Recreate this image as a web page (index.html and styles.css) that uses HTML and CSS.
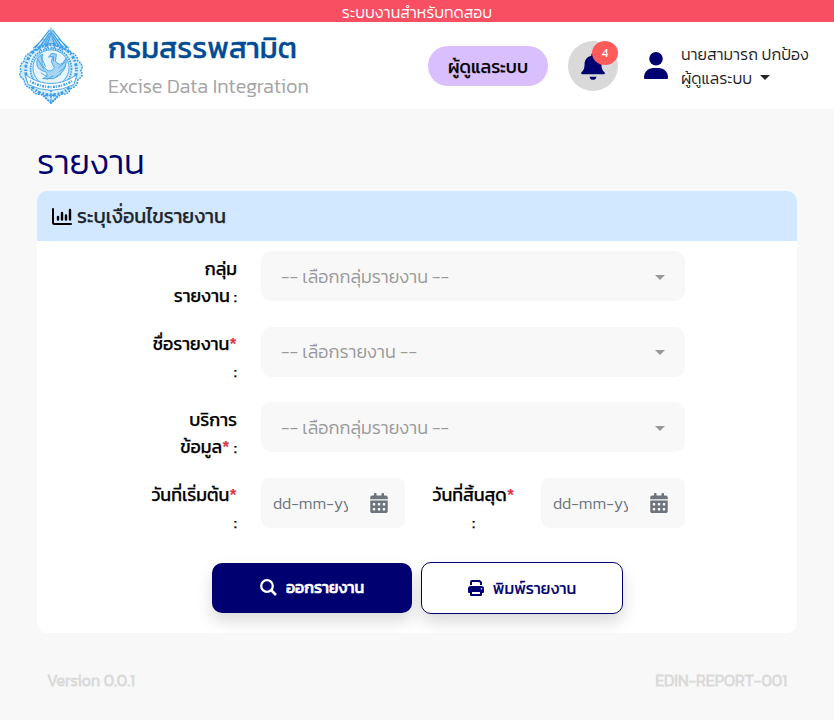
FILE: index.html
```html
<!DOCTYPE html>
<html lang="th">
<head>
<meta charset="utf-8">
<title>รายงาน</title>
<link rel="stylesheet" href="styles.css">
</head>
<body>
<svg width="0" height="0" class="defs">
  <symbol id="calendar" viewBox="0 0 448 512"><path d="M0 464c0 26.500 21.500 48 48 48h352c26.500 0 48-21.500 48-48V192H0v272zm320-196c0-6.600 5.400-12 12-12h40c6.600 0 12 5.400 12 12v40c0 6.600-5.400 12-12 12h-40c-6.600 0-12-5.400-12-12v-40zm0 128c0-6.600 5.400-12 12-12h40c6.600 0 12 5.400 12 12v40c0 6.600-5.400 12-12 12h-40c-6.600 0-12-5.400-12-12v-40zM192 268c0-6.600 5.400-12 12-12h40c6.600 0 12 5.400 12 12v40c0 6.600-5.400 12-12 12h-40c-6.600 0-12-5.400-12-12v-40zm0 128c0-6.600 5.400-12 12-12h40c6.600 0 12 5.400 12 12v40c0 6.600-5.400 12-12 12h-40c-6.600 0-12-5.400-12-12v-40zM64 268c0-6.600 5.400-12 12-12h40c6.600 0 12 5.400 12 12v40c0 6.600-5.400 12-12 12H76c-6.600 0-12-5.400-12-12v-40zm0 128c0-6.600 5.400-12 12-12h40c6.600 0 12 5.400 12 12v40c0 6.600-5.400 12-12 12H76c-6.600 0-12-5.400-12-12v-40zM400 64h-48V16c0-8.800-7.200-16-16-16h-32c-8.800 0-16 7.200-16 16v48H160V16c0-8.800-7.200-16-16-16h-32c-8.800 0-16 7.200-16 16v48H48C21.500 64 0 85.500 0 112v48h448v-48c0-26.500-21.500-48-48-48z"/></symbol>
</svg>
<div class="banner">ระบบงานสำหรับทดสอบ</div>
<header class="header">
  <svg class="emblem" viewBox="0 0 66 80" fill="none" stroke="#3b9ee8" stroke-width=".9">
    <path d="M32.500 0Q36 12 50 25L43 31Q33 23 22 31L15 25Q29 12 32.500 0Z" fill="#a5d3f7" stroke="none"/>
    <path stroke-width="1.100" d="M31 4L16 23M31 7L18 26M31 10L20 28M31 13L23 29M34 4L49 23M34 7L47 26M34 10L45 28M34 13L42 29M25 13L14 23M40 13L51 23"/>
    <path d="M32.500 5L35 18L37 27H28L30 18Z" fill="#e8f5ff"/>
    <path d="M32.500 8V27M29 22H36M30 18H35"/>
    <path d="M12 27Q15 23 20 25Q32.500 19 45 25Q50 23 53 27Q60 30 60 36Q67 40 63 46Q67 51 60 55Q60 62 53 64Q50 71 43 70Q38 74 32.500 79Q27 74 22 70Q15 71 12 64Q5 62 5 55Q-2 51 2 46Q-1 40 5 36Q5 30 12 27Z" fill="#d3eafc" stroke-width="1.500" stroke-dasharray="2 1"/>
    <circle cx="32.500" cy="45" r="26" stroke-width="3" stroke-dasharray="1.500 2 3 1.500"/>
    <circle cx="32.500" cy="45" r="23" stroke="#e8f5ff" stroke-width="2.500" stroke-dasharray="3 1.500 1 2"/>
    <circle cx="32.500" cy="44" r="21" stroke-width="1.800" stroke-dasharray="1.500 1"/>
    <circle cx="32.500" cy="43" r="18.500" fill="#e6f4fe"/>
    <path d="M18 40Q17 31 24 29Q21 40 28 45Q32 48 36 43L33 37L34 31L30 32L33 28L38 29L37 36Q42 44 48 33Q49 44 41 50L35 54H24Q31 51 27 47Q19 45 18 40Z" fill="#a5d4f7"/>
    <path d="M19 34L25 44M22 31L27 42M40 43L47 37M41 47L48 41M22 48L29 52M37 53L43 49M35 31V36M28 55L35 51"/>
    <path d="M6 50Q19 59 32.500 59Q46 59 59 50L56 60Q44 66 32.500 66Q21 66 9 60Z" fill="#fff"/>
    <path stroke-width="2.500" stroke-dasharray="1 1.500 2 1" d="M11 56.500Q21 62.500 32.500 62.500T54 56.500"/>
    <path stroke-width="1.500" stroke-dasharray="2 1" d="M24 68Q28 76 32.500 78Q37 76 41 68M28 69Q32 74 37 69M32.500 66V80"/>
  </svg>
  <div class="brand">
    <div class="brand-name">กรมสรรพสามิต</div>
    <div class="brand-sub">Excise Data Integration</div>
  </div>
  <div class="role-pill"><span>ผู้ดูแลระบบ</span></div>
  <div class="bell">
    <svg width="24" height="27" viewBox="0 0 448 512"><path fill="#000071" d="M288 448c0 35-28 60-64 60s-64-25-64-60zM439.400 362.300c-19.300-20.800-55.500-52-55.500-154.300 0-77.700-54.500-139.900-127.900-155.200V32c0-17.700-14.300-32-32-32s-32 14.300-32 32v20.800C118.600 68.100 64.100 130.300 64.100 208c0 102.300-36.200 133.500-55.500 154.300-6 6.500-8.700 14.200-8.600 21.700.1 10 6 17 18 17h412c12 0 18-7 18-17 .1-7.500-2.600-15.300-8.600-21.700z"/></svg>
    <span class="count">4</span>
  </div>
  <svg class="user-icon" viewBox="0 0 24 27" fill="#000071"><circle cx="12" cy="6.800" r="6.800"/><path d="M0 26V25.500C0 20 4 16 9.500 16h5C20 16 24 20 24 25.500V26Q24 27 23 27H1Q0 27 0 26Z"/></svg>
  <div class="user">
    <div class="user-name">นายสามารถ ปกป้อง</div>
    <div class="user-role"><span>ผู้ดูแลระบบ</span><i class="caret dark"></i></div>
  </div>
</header>
<main>
  <h1>รายงาน</h1>
  <section class="card">
    <div class="card-head">
      <svg width="20" height="17" viewBox="0 0 20 17" fill="none" stroke="#000" stroke-width="2" stroke-linecap="round"><path d="M1 1V14.500Q1 16 2.500 16H19"/><path stroke-width="2.400" d="M6 9V11.500M10 5V11.500M14 7.500V11.500M18 2V11.500"/></svg>
      <span>ระบุเงื่อนไขรายงาน</span>
    </div>
    <div class="form">
      <label>กลุ่ม<br>รายงาน :</label>
      <div class="select"><span>-- เลือกกลุ่มรายงาน --</span><i class="caret"></i></div>
      <label>ชื่อรายงาน<b>*</b><br>:</label>
      <div class="select"><span>-- เลือกรายงาน --</span><i class="caret"></i></div>
      <label>บริการ<br>ข้อมูล<b>*</b> :</label>
      <div class="select"><span>-- เลือกกลุ่มรายงาน --</span><i class="caret"></i></div>
      <label>วันที่เริ่มต้น<b>*</b><br>:</label>
      <div class="dates">
        <div class="date"><input type="text" placeholder="dd-mm-yyyy"><svg width="18" height="20"><use href="#calendar"/></svg></div>
        <label class="end-label">วันที่สิ้นสุด<b>*</b><br>:</label>
        <div class="date"><input type="text" placeholder="dd-mm-yyyy"><svg width="18" height="20"><use href="#calendar"/></svg></div>
      </div>
    </div>
    <div class="actions">
      <div class="btn primary">
        <svg width="17" height="17" viewBox="0 0 17 17" fill="none" stroke="#fff" stroke-width="2.200"><circle cx="7" cy="7" r="5.800"/><path stroke-width="2.600" d="M11 11L16 16"/></svg>
        <span>ออกรายงาน</span>
      </div>
      <div class="btn outline">
        <svg width="16" height="16" viewBox="0 0 16 16" fill="none" stroke="#000071" stroke-width="2"><path d="M3 5V2Q3 1 4 1H11.500L13 2.500V5"/><path fill="#000071" stroke="none" d="M2.500 6H13.500Q16 6 16 8.500V12Q16 13 15 13H1Q0 13 0 12V8.500Q0 6 2.500 6Z"/><path fill="#fff" stroke-linejoin="round" d="M3 11H13V15H3Z"/><circle cx="13.500" cy="8.700" r=".8" fill="#fff" stroke="none"/></svg>
        <span>พิมพ์รายงาน</span>
      </div>
    </div>
  </section>
</main>
<footer><span>Version 0.0.1</span><span>EDIN-REPORT-001</span></footer>
</body>
</html>
```
FILE: styles.css
```css
* { box-sizing: border-box; }
body { margin: 0; width: 834px; height: 720px; overflow: hidden; background: #f8f8f8; color: #212529; font-family: Kanit, Prompt, "Open Sans", sans-serif; font-size: 16px; white-space: nowrap; }
svg { display: block; flex: none; }
.defs { position: absolute; }
.banner { height: 22px; line-height: 25px; background: #f84f62; color: #fff; text-align: center; font-size: 16px; font-weight: 300; }
.header { height: 87px; background: #fff; display: flex; align-items: flex-start; padding-left: 18px; }
.emblem { width: 67px; height: 78px; margin-top: 4px; }
.brand { width: 320px; margin-left: 23px; flex: none; }
.brand-name { height: 50px; line-height: 51px; font-size: 29.7px; font-weight: 400; color: #004b93; -webkit-text-stroke: .4px #004b93; }
.brand-sub { height: 28px; line-height: 28px; font-size: 20px; font-weight: 300; color: #a5a5a5; }
.role-pill { flex: none; width: 120px; height: 40px; margin-top: 24px; border-radius: 20px; background: #dabfff; color: #000; display: flex; align-items: center; justify-content: center; font-size: 17.8px; font-weight: 400; -webkit-text-stroke: .25px #000; }
.bell { flex: none; position: relative; width: 50px; height: 50px; margin: 19px 0 0 20px; border-radius: 50%; background: #d9d9d9; display: flex; align-items: center; justify-content: center; }
.count { position: absolute; left: 24px; top: 0; width: 26px; height: 24px; line-height: 24px; border-radius: 50%; background: #ff5b5b; color: #fff; text-align: center; font-size: 12px; }
.user-icon { width: 24px; height: 27px; margin: 30px 0 0 26px; }
.user { margin: 20px 0 0 13px; font-size: 16px; font-weight: 300; line-height: 24px; }
.user-role { display: flex; align-items: center; gap: 8px; }
.caret { border: 5px solid transparent; border-top-color: #999; border-bottom: 0; margin-top: 2px; }
.caret.dark { border-top-color: #212529; margin-top: -2px; }
main { padding: 29px 37px 0; }
h1 { margin: 0; height: 53px; line-height: 48px; font-size: 34.5px; font-weight: 300; color: #000071; }
.card { height: 442px; background: #fff; border-radius: 10px; overflow: hidden; }
.card-head { height: 50px; background: #d2e8ff; display: flex; align-items: center; gap: 5px; padding-left: 15px; font-size: 19.8px; font-weight: 400; -webkit-text-stroke: .25px #212529; }
.form { display: grid; grid-template-columns: 200px 424px; grid-auto-rows: 50px; gap: 25.6px 24px; padding-top: 10px; }
label { text-align: right; line-height: 27px; padding-top: 4px; margin-top: -.4px; font-size: 17.8px; font-weight: 400; color: #000; -webkit-text-stroke: .25px; }
label b { color: #dc3545; font-weight: 400; }
.select { background: #f8f8f8; border-radius: 10px; display: flex; align-items: center; justify-content: space-between; padding: 0 20px; font-size: 18px; font-weight: 300; color: #999; }
.dates { display: flex; }
.date { width: 144px; height: 50px; border-radius: 8px; background: #f8f8f8; display: flex; align-items: center; justify-content: space-between; padding: 0 17px 0 12px; }
.date input { width: 75px; padding: 0; border: 0; background: none; font: 300 16px Kanit, Prompt, sans-serif; color: #212529; }
.date input::placeholder { color: #6c757d; }
.date svg { fill: #6c757d; }
.end-label { width: 136px; padding-left: 1px; text-align: center; }
.actions { display: flex; align-items: center; gap: 9px; padding-left: 175px; margin-top: 34px; }
.btn { height: 50px; width: 200px; border-radius: 10px; display: flex; align-items: center; justify-content: center; gap: 9px; font-weight: 400; box-shadow: 0 8px 16px rgba(0,0,0,.15); }
.primary { background: #000071; color: #fff; font-size: 15.9px; -webkit-text-stroke: .7px #fff; }
.outline { width: 202px; height: 52px; border: 1px solid #000071; color: #000071; background: #fff; -webkit-text-stroke: .2px #000071; }
footer { display: flex; justify-content: space-between; padding: 35px 47px 0 47px; line-height: 24px; font-weight: 300; color: #dadada; -webkit-text-stroke: .8px #dadada; }
```
